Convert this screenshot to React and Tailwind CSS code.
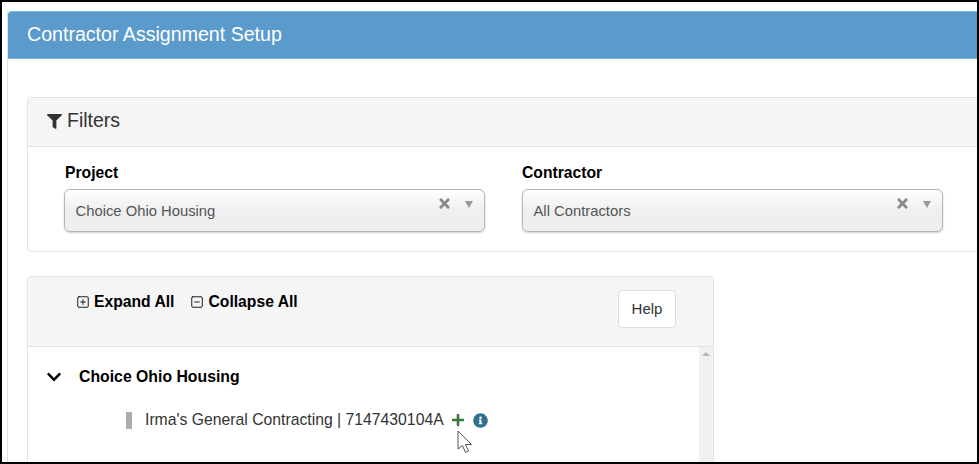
import React from "react";
import { FaFilter, FaTimes, FaChevronDown, FaPlus, FaInfoCircle } from "react-icons/fa";
import { FiPlusSquare, FiMinusSquare } from "react-icons/fi";

function SelectBox({ value }) {
  return (
    <div className="relative h-[43px] w-[421px] rounded-[6px] border border-[#b5b5b5] bg-gradient-to-b from-white via-[#efefef] via-50% to-[#efefef] shadow-[0_1px_2px_rgba(0,0,0,0.2)]">
      <span className="absolute left-[10.5px] top-[12px] text-[14.8px] leading-[18px] text-[#555]">{value}</span>
      <FaTimes className="absolute right-[33px] top-[6px] h-[15px] w-[13px] text-[#888]" />
      <div className="absolute right-[11px] top-[11px] h-0 w-0 border-x-[4.5px] border-t-[7px] border-x-transparent border-t-[#999]" />
    </div>
  );
}

function Cursor() {
  return (
    <svg className="absolute left-[455px] top-[428px]" width="17" height="24" viewBox="0 0 17 24">
      <path d="M1 1 L1 19 L5.5 15.5 L8.5 22.5 L11.5 21 L8.5 14.5 L14.5 14.5 Z" fill="#fff" stroke="#555" strokeWidth="1" />
    </svg>
  );
}

export default function App() {
  return (
    <div className="relative h-[464px] w-[979px] overflow-hidden border-2 border-black bg-white font-['Liberation_Sans',sans-serif] text-[#333]">
      <div className="ml-[5px] mt-[9px] h-[460px] border-l border-[#cfe9f3]">
        <div className="flex h-[48px] items-center rounded-tl-[4px] border-y border-[#79b8e0] bg-[#5b9bcc] pl-[19px] text-[19.6px] text-white">
          Contractor Assignment Setup
        </div>

        <div className="ml-[19px] mt-[38px] h-[155px] w-[960px] rounded-[4px] border border-[#e3e3e3]">
          <div className="flex h-[49px] items-center gap-[5px] rounded-t-[4px] border-b border-[#e3e3e3] bg-[#f5f5f5] pb-[2px] pl-[19px] text-[19.5px]">
            <FaFilter className="h-[15px] w-[15px] text-[#333]" />
            Filters
          </div>
          <div className="flex gap-[37px] pl-[36px] pt-[17px]">
            <div>
              <div className="mb-[7px] pl-[1px] text-[15.7px] font-bold leading-[18px] text-black">Project</div>
              <SelectBox value="Choice Ohio Housing" />
            </div>
            <div>
              <div className="mb-[7px] text-[15.7px] font-bold leading-[18px] text-black">Contractor</div>
              <SelectBox value="All Contractors" />
            </div>
          </div>
        </div>

        <div className="ml-[19px] mt-[24px] h-[200px] w-[687px] rounded-t-[4px] border border-[#e3e3e3]">
          <div className="flex h-[70px] justify-between rounded-t-[4px] border-b border-[#e3e3e3] bg-[#f5f5f5] pl-[48px] pr-[37px] pt-[13px]">
            <div className="flex h-[24px] items-center gap-[16px] text-[15.7px] font-bold text-black">
              <span className="flex items-center gap-[4px]">
                <FiPlusSquare className="h-[14px] w-[14px]" strokeWidth={1.5} />
                Expand All
              </span>
              <span className="flex items-center gap-[4px]">
                <FiMinusSquare className="h-[14px] w-[14px]" strokeWidth={1.5} />
                Collapse All
              </span>
            </div>
            <button className="h-[38px] w-[58px] rounded-[4px] border border-[#ddd] bg-white text-[15px] text-[#333]">
              Help
            </button>
          </div>
          <div className="flex h-[130px]">
            <div className="flex-1">
              <div className="mt-[20px] flex h-[20px] items-center pl-[18px] text-[15.8px] font-bold text-black">
                <FaChevronDown className="h-[16px] w-[16px]" />
                <span className="ml-[17px]">Choice Ohio Housing</span>
              </div>
              <div className="mt-[23px] flex h-[20px] items-center pl-[98px] text-[15.75px] text-[#333]">
                <span className="h-[17px] w-[6px] bg-[#adadad]" />
                <span className="ml-[13px]">Irma's General Contracting | 7147430104A</span>
                <FaPlus className="ml-[7px] h-[14px] w-[14px] text-[#3c763d]" />
                <FaInfoCircle className="ml-[8px] h-[15px] w-[15px] text-[#31708f]" />
              </div>
            </div>
            <div className="flex w-[14px] justify-center bg-[#f1f1f1] pt-[5px]">
              <div className="h-0 w-0 border-x-[4px] border-b-[4px] border-x-transparent border-b-[#b5b5b5]" />
            </div>
          </div>
        </div>
      </div>
      <Cursor />
    </div>
  );
}
